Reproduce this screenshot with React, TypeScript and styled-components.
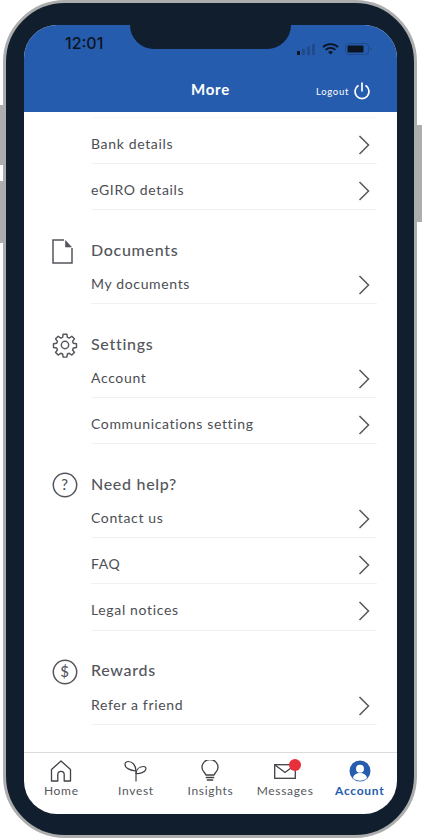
import React from 'react';
import styled, { createGlobalStyle } from 'styled-components';

const GlobalStyle = createGlobalStyle`
    html, body {
        margin: 0;
        padding: 0;
        background: #ffffff;
        font-family: "Lato", "Noto Sans", sans-serif;
    }
`;

const Stage = styled.div`
    position: relative;
    width: 422px;
    height: 840px;
    padding: 0 5px 2px 3px;
    box-sizing: border-box;
    overflow: hidden;
`;

const SideButton = styled.div<{ $side: 'left' | 'right'; $top: number; $height: number }>`
    position: absolute;
    ${({ $side }) => ($side === 'left' ? 'left: 0; width: 4px;' : 'right: 0; width: 6px;')}
    top: ${({ $top }) => $top}px;
    height: ${({ $height }) => $height}px;
    background: #aeaeae;
`;

const Phone = styled.div`
    position: relative;
    z-index: 1;
    height: 100%;
    box-sizing: border-box;
    padding: 22px 17px 21px 18px;
    background: #101e2e;
    border: 3px solid #adadad;
    border-radius: 62px;
`;

const Screen = styled.div`
    position: relative;
    height: 100%;
    display: flex;
    flex-direction: column;
    background: #ffffff;
    border-radius: 33px;
    overflow: hidden;
`;

const Notch = styled.div`
    position: absolute;
    top: 0;
    left: 106px;
    width: 161px;
    height: 24px;
    background: #101e2e;
    border-radius: 0 0 26px 26px;
`;

const Header = styled.header`
    flex: none;
    height: 87px;
    background: #265cad;
    display: flex;
    flex-direction: column;
    color: #ffffff;
`;

const StatusBar = styled.div`
    height: 48px;
    box-sizing: border-box;
    display: flex;
    align-items: flex-start;
    justify-content: space-between;
    padding: 9px 25px 0 41px;
`;

const Clock = styled.span`
    font-family: "Inter", sans-serif;
    font-size: 16px;
    line-height: 18px;
    font-weight: 500;
    color: #0b1420;
`;

const StatusIcons = styled.div`
    display: flex;
    align-items: center;
    gap: 6px;
    padding-top: 9px;
`;

const TitleBar = styled.div`
    position: relative;
    height: 32px;
    display: flex;
    align-items: center;
    justify-content: center;
`;

const Title = styled.h1`
    margin: 0;
    font-size: 15px;
    line-height: 20px;
    font-weight: 700;
    letter-spacing: 0.8px;
`;

const Logout = styled.div`
    position: absolute;
    right: 26px;
    top: 9px;
    display: flex;
    align-items: center;
    gap: 4px;
    font-size: 9.5px;
    letter-spacing: 0.7px;
`;

const Content = styled.main`
    flex: 1;
    min-height: 0;
    overflow: hidden;
    padding: 0 20px 0 67px;
`;

const CutRow = styled.div`
    height: 5px;
    border-bottom: 1px solid #f8f8f8;
`;

const Section = styled.section`
    padding-top: 29px;
`;

const SectionTitle = styled.div`
    position: relative;
    height: 20px;
    display: flex;
    align-items: center;
    font-size: 16px;
    font-weight: 500;
    letter-spacing: 0.7px;
    color: #54565c;
`;

const SectionIcon = styled.div`
    position: absolute;
    left: -39px;
    top: -1px;
    width: 26px;
    height: 26px;
    display: flex;
    align-items: center;
    justify-content: flex-start;
`;

const Row = styled.div`
    height: 46.065px;
    box-sizing: border-box;
    padding: 16px 0 9px;
    border-bottom: 1px solid #f1f1f1;
    display: flex;
    align-items: center;
    justify-content: space-between;
    font-size: 14px;
    line-height: 20px;
    letter-spacing: 0.65px;
    color: #4c4e54;

    ${SectionTitle} + & {
        height: 45.065px;
        padding-top: 15px;
    }
`;

const RowArrow = styled.svg`
    margin: 2px 7px 0 0;
`;

const TabBar = styled.nav`
    flex: none;
    height: 62px;
    box-sizing: border-box;
    border-top: 1px solid #dcdcdc;
    display: grid;
    grid-template-columns: repeat(5, 1fr);
`;

const Tab = styled.div<{ $active?: boolean }>`
    display: flex;
    flex-direction: column;
    align-items: center;
    padding-top: 6px;
    font-size: 12px;
    line-height: 16px;
    letter-spacing: 0.7px;
    font-weight: ${({ $active }) => ($active ? 700 : 400)};
    color: ${({ $active }) => ($active ? '#265cad' : '#55575c')};
`;

const TabIcon = styled.div`
    position: relative;
    height: 24px;
    display: flex;
    align-items: center;
    justify-content: center;
`;

const Badge = styled.span`
    position: absolute;
    top: 0;
    right: -5px;
    width: 12px;
    height: 12px;
    border-radius: 50%;
    background: #e8303c;
`;

const Chevron = () => (
    <RowArrow width="12" height="20" viewBox="0 0 12 20" fill="none" stroke="#55575c" strokeWidth="1.5">
        <path d="M1.5 1l9 9-9 9" />
    </RowArrow>
);

const PowerIcon = () => (
    <svg width="18" height="18" viewBox="0 0 18 18" fill="none" stroke="#fff" strokeWidth="1.7" strokeLinecap="round">
        <path d="M9 1.2v7.6" />
        <path d="M5 3.8a7 7 0 1 0 8 0" />
    </svg>
);

const DocIcon = () => (
    <svg width="21" height="25" viewBox="0 0 21 25" fill="none" stroke="#54565c" strokeWidth="1.5">
        <path d="M12 1H1v23h19V9" />
        <path d="M13.5 1.5v6.5h6z" fill="#54565c" strokeWidth="0.6" />
    </svg>
);

const GearIcon = () => (
    <svg width="26" height="26" viewBox="0 0 24 24" fill="none" stroke="#54565c" strokeWidth="1.35" strokeLinejoin="round">
        <circle cx="12" cy="12" r="3.4" />
        <path d="M10.3 2h3.4l.5 2.9 1.7.7 2.4-1.7 2.4 2.4-1.7 2.4.7 1.7 2.9.5v3.4l-2.9.5-.7 1.7 1.7 2.4-2.4 2.4-2.4-1.7-1.7.7-.5 2.9h-3.4l-.5-2.9-1.7-.7-2.4 1.7-2.4-2.4 1.7-2.4-.7-1.7-2.9-.5v-3.4l2.9-.5.7-1.7-1.7-2.4 2.4-2.4 2.4 1.7 1.7-.7z" />
    </svg>
);

const CircleGlyph = ({ glyph }: { glyph: string }) => (
    <svg width="26" height="26" viewBox="0 0 26 26" fill="none" stroke="#54565c" strokeWidth="1.5">
        <circle cx="13" cy="13" r="11.7" />
        <text x="13" y="18.2" textAnchor="middle" fontSize="15" fontFamily="Lato, sans-serif" fill="#54565c" stroke="none">
            {glyph}
        </text>
    </svg>
);

const Signal = () => (
    <svg width="19" height="11" viewBox="0 0 19 11">
        <rect x="0" y="7" width="3" height="4" rx="0.5" fill="#0b1420" />
        <rect x="5" y="5" width="3" height="6" fill="#1f4a8c" />
        <rect x="10" y="2.5" width="3" height="8.5" fill="#1f4a8c" />
        <rect x="15" y="0" width="3" height="11" fill="#1f4a8c" />
    </svg>
);

const Wifi = () => (
    <svg width="17" height="12" viewBox="0 0 17 12" fill="none" stroke="#0b1420" strokeWidth="1.8">
        <path d="M1 4.2a10.8 10.8 0 0 1 15 0" />
        <path d="M3.6 6.9a7 7 0 0 1 9.8 0" />
        <path d="M8.5 11.6l-2.4-2.5a3.4 3.4 0 0 1 4.8 0z" fill="#0b1420" stroke="none" />
    </svg>
);

const Battery = () => (
    <svg width="27" height="12" viewBox="0 0 27 12">
        <rect x="0.5" y="0.5" width="23" height="11" rx="3" fill="none" stroke="#1f4a8c" />
        <rect x="2.5" y="2.5" width="16" height="7" rx="1" fill="#0b1420" />
        <path d="M25 4.5c1 .3 1.5.8 1.5 1.5s-.5 1.2-1.5 1.5z" fill="#1f4a8c" />
    </svg>
);

const HomeIcon = () => (
    <svg width="22" height="22" viewBox="0 0 22 22" fill="none" stroke="#3f4146" strokeWidth="1.3" strokeLinejoin="round">
        <path d="M1.5 9.5L11 1l9.5 8.5V21h-6.3v-6.5a3.2 3.2 0 0 0-6.4 0V21H1.5z" />
    </svg>
);

const SproutIcon = () => (
    <svg width="24" height="22" viewBox="0 0 24 22" fill="none" stroke="#3f4146" strokeWidth="1.2">
        <path d="M12 21.5V11" />
        <path d="M12 11C12 5 8 1.500 4.500 1.500 2 1.500 1 3 1 4.500 1 8 6 10.500 12 11z" />
        <path d="M12 13.500C12.500 9.500 15.500 6.500 19.500 6.500 21.500 6.500 22.300 8 21.800 9.500 21 12 16 14 12 13.500z" />
    </svg>
);

const BulbIcon = () => (
    <svg width="18" height="23" viewBox="0 0 18 23" fill="none" stroke="#3f4146" strokeWidth="1.3" strokeLinecap="round">
        <path d="M5 15c-.5-2-4-3.500-4-7.500a8 8 0 0 1 16 0c0 4-3.500 5.500-4 7.500z" />
        <path d="M5.500 17.500h7M6.500 20h5" strokeWidth="1.7" />
    </svg>
);

const MailIcon = () => (
    <svg width="22" height="15" viewBox="0 0 22 15" fill="none" stroke="#3f4146" strokeWidth="1.3">
        <rect x="0.7" y="0.7" width="20.6" height="13.6" />
        <path d="M0.7 0.7L11 8.5 21.3 0.7" />
    </svg>
);

const AccountIcon = () => (
    <svg width="22" height="22" viewBox="0 0 22 22">
        <circle cx="11" cy="11" r="10.5" fill="#265cad" />
        <circle cx="11" cy="8.8" r="4" fill="#fff" />
        <path d="M3.8 18c1-3.500 3.800-5 7.200-5s6.200 1.500 7.200 5a10.500 10.500 0 0 1-14.400 0z" fill="#fff" />
    </svg>
);

const sections = [
    { title: 'Documents', icon: <DocIcon />, rows: ['My documents'] },
    { title: 'Settings', icon: <GearIcon />, rows: ['Account', 'Communications setting'] },
    { title: 'Need help?', icon: <CircleGlyph glyph="?" />, rows: ['Contact us', 'FAQ', 'Legal notices'] },
    { title: 'Rewards', icon: <CircleGlyph glyph="$" />, rows: ['Refer a friend'] },
];

const tabs = [
    { label: 'Home', icon: <HomeIcon /> },
    { label: 'Invest', icon: <SproutIcon /> },
    { label: 'Insights', icon: <BulbIcon /> },
    { label: 'Messages', icon: <MailIcon />, badge: true },
    { label: 'Account', icon: <AccountIcon />, active: true },
];

const App = () => (
    <Stage>
        <GlobalStyle />
        <SideButton $side="left" $top={105} $height={60} />
        <SideButton $side="left" $top={181} $height={62} />
        <SideButton $side="right" $top={125} $height={97} />
        <Phone>
            <Screen>
                <Header>
                    <StatusBar>
                        <Clock>12:01</Clock>
                        <StatusIcons>
                            <Signal />
                            <Wifi />
                            <Battery />
                        </StatusIcons>
                    </StatusBar>
                    <TitleBar>
                        <Title>More</Title>
                        <Logout>
                            Logout
                            <PowerIcon />
                        </Logout>
                    </TitleBar>
                </Header>
                <Notch />
                <Content>
                    <CutRow />
                    <Row>
                        Bank details
                        <Chevron />
                    </Row>
                    <Row>
                        eGIRO details
                        <Chevron />
                    </Row>
                    {sections.map((section) => (
                        <Section key={section.title}>
                            <SectionTitle>
                                <SectionIcon>{section.icon}</SectionIcon>
                                {section.title}
                            </SectionTitle>
                            {section.rows.map((row) => (
                                <Row key={row}>
                                    {row}
                                    <Chevron />
                                </Row>
                            ))}
                        </Section>
                    ))}
                </Content>
                <TabBar>
                    {tabs.map((tab) => (
                        <Tab key={tab.label} $active={tab.active}>
                            <TabIcon>
                                {tab.icon}
                                {tab.badge && <Badge />}
                            </TabIcon>
                            {tab.label}
                        </Tab>
                    ))}
                </TabBar>
            </Screen>
        </Phone>
    </Stage>
);

export default App;
